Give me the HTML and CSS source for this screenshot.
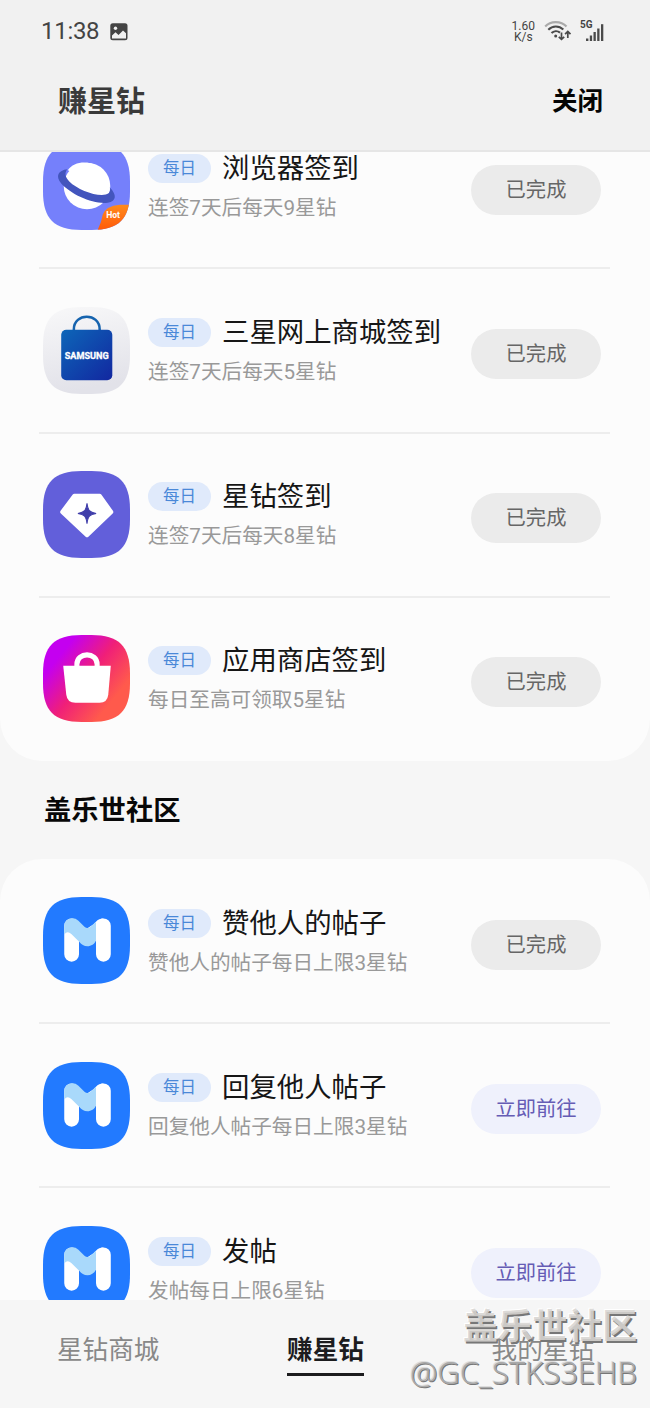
FILE: index.html
```html
<!DOCTYPE html>
<html lang="zh-CN">
<head>
<meta charset="utf-8">
<title>赚星钻</title>
<link rel="stylesheet" href="styles.css">
</head>
<body>
<svg class="defs" width="0" height="0" aria-hidden="true">
  <defs>
    <path id="tile" d="M38 0H48C75 0 86 11 86 38V48C86 75 75 86 48 86H38C11 86 0 75 0 48V38C0 11 11 0 38 0Z"/>
    <clipPath id="tileClip"><use href="#tile"/></clipPath>
    <linearGradient id="hot" x1="0" y1="0" x2="0" y2="1"><stop offset="0" stop-color="#ff8a1c"/><stop offset="1" stop-color="#ff5a0a"/></linearGradient>
    <linearGradient id="mall" x1="0" y1="0" x2="0.2" y2="1"><stop offset="0" stop-color="#f8f8f9"/><stop offset="1" stop-color="#e2e2e9"/></linearGradient>
    <linearGradient id="bagBlue" x1="0" y1="0" x2="1" y2="1"><stop offset="0" stop-color="#0d66b8"/><stop offset="1" stop-color="#1227a0"/></linearGradient>
    <linearGradient id="store" x1="0.1" y1="0.35" x2="0.72" y2="0.85"><stop offset="0" stop-color="#c400f0"/><stop offset="0.5" stop-color="#f01f78"/><stop offset="1" stop-color="#ff5a4c"/></linearGradient>
    <symbol id="community" viewBox="0 0 86 86">
      <use href="#tile" fill="#227aff"/>
      <path d="M28.300 28.500V56.700M59.700 28.500V56.700" stroke="#fff" stroke-width="14.600" stroke-linecap="round"/>
      <path d="M59.700 21.200C55 21.200 53 23.500 50 27L44 31V48L52.400 43Z" fill="#fff"/>
      <path d="M21 36V28.500C21 21.500 30 18.500 35 23.500L41 29.500Q44 32 47 29.500L52.400 24.500V43C51 46.500 47.500 48.700 44 48.700 40.500 48.700 38 47 36 44.500L28 36.500Q24 33 21 37Z" fill="#a9d9fb"/>
    </symbol>
  </defs>
</svg>
<div class="screen">
  <header class="top">
    <div class="status">
      <span class="clock">11:38</span>
      <svg class="photo" width="18" height="18" viewBox="0 0 18 18"><rect x="0.300" y="0.300" width="17.200" height="17" rx="2.500" fill="#444"/><circle cx="5.500" cy="5.300" r="1.700" fill="#f1f1f1"/><path d="M2 12.500 5.500 9.300 8.500 12 13 7.500 16 10.300V15.600H2Z" fill="#f1f1f1"/></svg>
      <span class="speed"><span>1.60</span><span>K/s</span></span>
      <svg class="wifi" width="28" height="22" viewBox="0 0 28 22" fill="none" stroke="#4a4a4a" stroke-width="2.100">
        <path d="M1.200 6.500C6.500 0.700 17 0.700 22.500 6.500" stroke="#aaa"/>
        <path d="M4.300 9.800C8.500 5.500 15 5.500 19.300 9.600M7.500 13.100C9.800 10.800 13.400 10.500 16 12.600"/>
        <circle cx="11.700" cy="16" r="1.500" fill="#4a4a4a" stroke="none"/>
        <path d="M17.500 12.500V19M14.800 16.800 17.500 19.400 20.200 16.800M23.800 18V11.500M21.100 14.200 23.800 11.500 26.500 14.200" stroke-width="1.700"/>
      </svg>
      <span class="cell"><span class="gen">5G</span>
        <svg width="18" height="18" viewBox="0 0 18 18" fill="#4a4a4a"><rect x="0" y="14.500" width="2.400" height="2.500"/><rect x="3.800" y="11.500" width="2.300" height="5.500"/><rect x="7.500" y="8" width="2.300" height="9"/><rect x="11.200" y="4.500" width="2.300" height="12.500"/><rect x="15" y="0.200" width="2.300" height="16.800"/></svg>
      </span>
    </div>
    <div class="titlebar"><h1>赚星钻</h1><span class="close">关闭</span></div>
  </header>

  <main class="content">
    <section class="card first">
      <article class="row">
        <svg class="icon" viewBox="0 0 86 86"><g clip-path="url(#tileClip)"><rect width="86" height="86" fill="#7580fb"/><circle cx="43.500" cy="42.500" r="23" fill="#fff"/><path d="M24 26C15 27 12 33 18 40C28 51 50 61 64 59C73 57.500 73 51 66 44C67 47 66 50 62 51C52 53 34 46 26 38C22 34 21 30 24 26Z" fill="#4355bd"/><path d="M24.500 27C30 18 45 17 54 23C62 28 66 36 65.500 44Z" fill="#fff"/><path d="M86 61H76Q62 62 59 71Q58 78 54 86H86Z" fill="url(#hot)"/><text class="hot" x="62.500" y="74.500">Hot</text></g></svg>
        <div class="info"><div class="headline"><span class="badge">每日</span><h2>浏览器签到</h2></div><p>连签7天后每天9星钻</p></div>
        <span class="btn done">已完成</span>
      </article>
      <article class="row">
        <svg class="icon" viewBox="0 0 86 86"><use href="#tile" fill="url(#mall)"/><path d="M30.500 25V22C30.500 5.500 56 5.500 56 22V25" fill="none" stroke="#1663ae" stroke-width="2.500"/><rect x="18" y="22.500" width="50.500" height="50" rx="5" fill="url(#bagBlue)"/><text class="brand" x="21.500" y="51" textLength="43.500" lengthAdjust="spacingAndGlyphs">SAMSUNG</text></svg>
        <div class="info"><div class="headline"><span class="badge">每日</span><h2>三星网上商城签到</h2></div><p>连签7天后每天5星钻</p></div>
        <span class="btn done">已完成</span>
      </article>
      <article class="row">
        <svg class="icon" viewBox="0 0 86 86"><use href="#tile" fill="#625fda"/><path d="M31 24.500H56L67.500 40.500 43.500 63.500 19 40.500Z" fill="#fff" stroke="#fff" stroke-width="4" stroke-linejoin="round"/><path d="M43.500 32C44.300 39 46 41 52.500 42 46 43 44.300 45 43.500 52 42.700 45 41 43 34.500 42 41 41 42.700 39 43.500 32Z" fill="#403eaa" stroke="#403eaa"/></svg>
        <div class="info"><div class="headline"><span class="badge">每日</span><h2>星钻签到</h2></div><p>连签7天后每天8星钻</p></div>
        <span class="btn done">已完成</span>
      </article>
      <article class="row">
        <svg class="icon" viewBox="0 0 86 86"><use href="#tile" fill="url(#store)"/><path d="M20 30.500H67L64.500 59Q63.500 67 56 67H32Q24 67 23 59Z" fill="#fff"/><path d="M33.500 32V29C33.500 16.500 53.500 16.500 53.500 29V32" fill="none" stroke="#fff" stroke-width="5"/></svg>
        <div class="info"><div class="headline"><span class="badge">每日</span><h2>应用商店签到</h2></div><p>每日至高可领取5星钻</p></div>
        <span class="btn done">已完成</span>
      </article>
    </section>

    <h3 class="group">盖乐世社区</h3>

    <section class="card">
      <article class="row">
        <svg class="icon" viewBox="0 0 86 86"><use href="#community"/></svg>
        <div class="info"><div class="headline"><span class="badge">每日</span><h2>赞他人的帖子</h2></div><p>赞他人的帖子每日上限3星钻</p></div>
        <span class="btn done">已完成</span>
      </article>
      <article class="row">
        <svg class="icon" viewBox="0 0 86 86"><use href="#community"/></svg>
        <div class="info"><div class="headline"><span class="badge">每日</span><h2>回复他人帖子</h2></div><p>回复他人帖子每日上限3星钻</p></div>
        <span class="btn go">立即前往</span>
      </article>
      <article class="row">
        <svg class="icon" viewBox="0 0 86 86"><use href="#community"/></svg>
        <div class="info"><div class="headline"><span class="badge">每日</span><h2>发帖</h2></div><p>发帖每日上限6星钻</p></div>
        <span class="btn go">立即前往</span>
      </article>
    </section>
  </main>

  <nav class="tabs"><span>星钻商城</span><span class="active">赚星钻</span><span>我的星钻</span></nav>
  <div class="watermark"><span class="wm-name">盖乐世社区</span><span class="wm-user">@GC_STKS3EHB</span></div>
</div>
</body>
</html>
```
FILE: styles.css
```css
* { box-sizing: border-box; }
body { margin: 0; background: #f6f6f6; font-family: Roboto, "Noto Sans CJK SC", sans-serif; }
h1, h2, h3, p { margin: 0; font-weight: 400; }
.defs { display: block; position: absolute; }
.screen { position: relative; display: flex; flex-direction: column; width: 650px; height: 1408px; overflow: hidden; }

.top { flex: none; height: 152px; background: #f1f1f1; border-bottom: 2px solid #e6e6e6; }
.status { display: flex; align-items: center; height: 62px; padding: 0 46px 0 41px; color: #444; }
.clock { font-size: 24px; line-height: 30px; letter-spacing: -0.3px; }
.photo { margin: 2px 0 0 11px; }
.speed { display: flex; flex-direction: column; align-items: center; margin-left: auto; font-size: 12px; line-height: 11px; padding-top: 2px; }
.wifi { margin: 0 0 0 9px; }
.cell { display: flex; align-items: flex-end; width: 24px; height: 22px; margin-left: 8px; }
.gen { width: 6px; align-self: flex-start; font-size: 10px; line-height: 10px; font-weight: 700; }
.cell svg { flex: none; }
.titlebar { display: flex; justify-content: space-between; align-items: center; height: 78px; padding: 0 47px 0 58px; }
.titlebar h1 { font-size: 29px; line-height: 40px; font-weight: 700; color: #3a3a3a; padding-top: 1px; }
.close { font-size: 25.500px; line-height: 40px; font-weight: 700; color: #050505; }

.content { flex: none; height: 1148px; overflow: hidden; }
.card { background: #fcfcfc; border-radius: 42px; }
.card.first { margin-top: -47.700px; }
.row { position: relative; display: flex; height: 164.150px; padding: 39px 49px 0 43px; }
.row:not(:last-child)::after { content: ""; position: absolute; left: 39px; right: 40px; bottom: -1px; height: 2px; background: #ededed; }
.icon { flex: none; width: 87px; height: 87px; margin-top: -0.700px; }
.info { flex: 1; margin-left: 18px; padding-top: 6px; white-space: nowrap; }
.headline { display: flex; align-items: center; height: 38px; }
.badge { width: 63px; height: 29px; border-radius: 15px; background: #e0eafb; color: #4a88d8; font-size: 16.500px; line-height: 29px; text-align: center; }
.headline h2 { margin-left: 11px; padding-top: 1px; font-size: 27.400px; line-height: 38px; color: #161616; }
.info p { font-size: 20.650px; line-height: 30px; margin-top: 5.500px; color: #999; }
.btn { flex: none; width: 130px; height: 50px; margin-top: 21.500px; border-radius: 25px; font-size: 20.300px; line-height: 50px; text-align: center; }
.done { background: #ebebeb; color: #666; }
.go { background: #eff1fc; color: #655cb5; }
.hot { font: 700 8.500px Roboto, sans-serif; fill: #fff; }
.brand { font: 700 8.600px Roboto, sans-serif; fill: #fff; stroke: #fff; stroke-width: 0.300px; }
.group { height: 98.300px; padding-left: 44px; font-size: 27.300px; line-height: 101px; font-weight: 700; color: #080808; }

.tabs { flex: 1; display: flex; justify-content: space-between; padding: 30px 56px 0 57px; background: #f6f6f6; font-size: 25.600px; line-height: 40px; color: #888; }
.tabs span { height: 46px; }
.tabs .active { color: #1c1c1e; font-weight: 700; border-bottom: 3px solid #1c1c1e; }
.watermark { position: absolute; right: 13px; bottom: 14px; display: flex; flex-direction: column; align-items: flex-end; color: rgba(216, 213, 210, 0.9); white-space: nowrap; }
.wm-name { font-size: 34.800px; line-height: 46px; font-weight: 700; text-shadow: 1.500px 1.500px 0 #777, -1px -1px 0 #fff; }
.wm-user { font-family: "Noto Sans", sans-serif; font-size: 30.900px; line-height: 44px; font-weight: 300; color: #aaa; text-shadow: 1px 1px 0 #777, -1px -1px 0 #ddd; }
```
